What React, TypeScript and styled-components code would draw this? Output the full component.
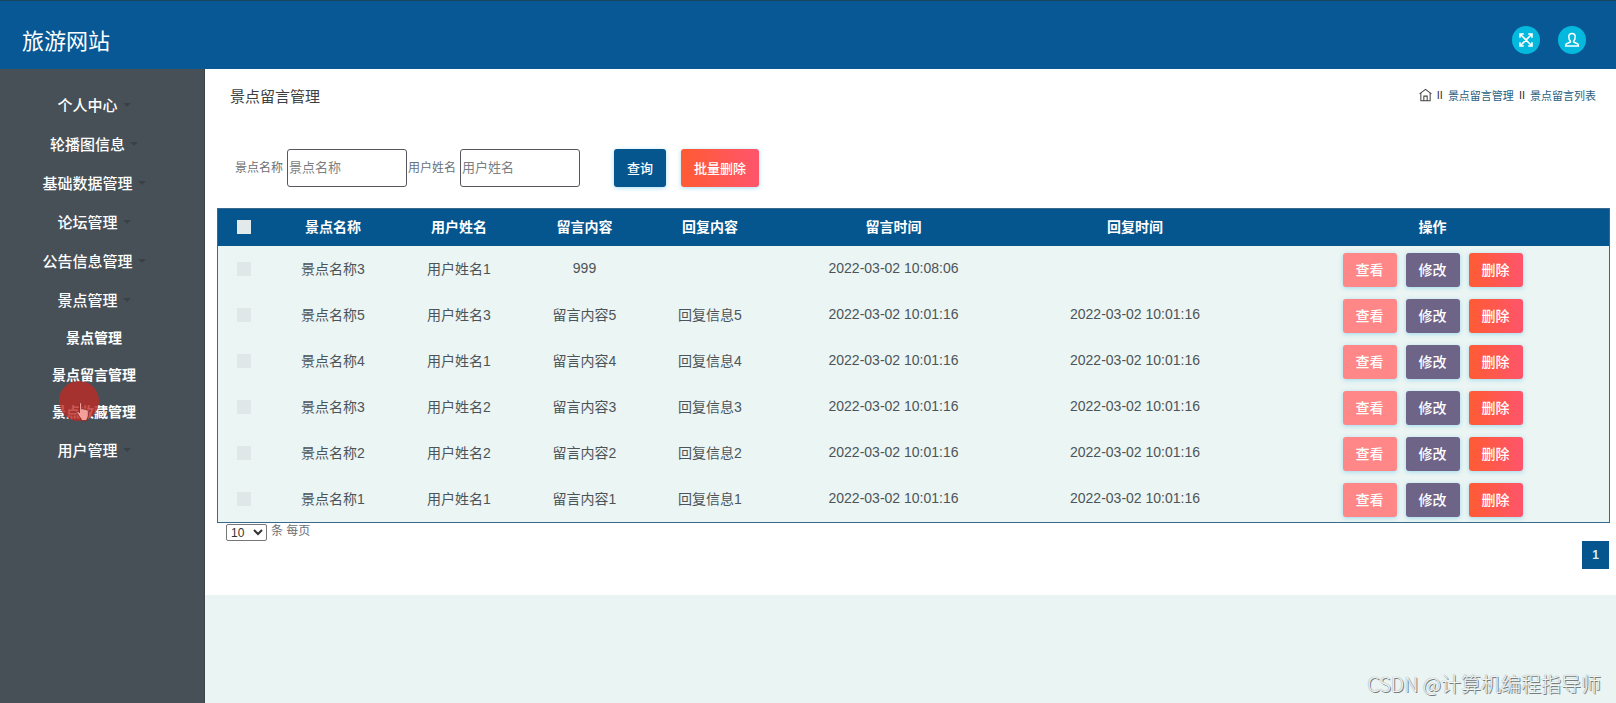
import React from "react";
import styled, { createGlobalStyle, css } from "styled-components";

const blue = "#05568f";

const GlobalStyle = createGlobalStyle`
  * { box-sizing: border-box; }
  body {
    margin: 0;
    background: #eaf4f3;
    font-family: "Liberation Sans", "Noto Sans CJK SC", sans-serif;
    color: #6b7075;
  }
  button, input, select { font-family: inherit; }
  a { text-decoration: none; color: inherit; }
`;

const Page = styled.div`
  position: relative;
  display: flex;
  flex-direction: column;
  min-height: 100vh;
`;

const Header = styled.header`
  display: flex;
  align-items: center;
  justify-content: space-between;
  height: 69px;
  padding: 10px 30px 0 22px;
  background: #075894;
  border-top: 1px solid #164657;
`;

const Brand = styled.h1`
  margin: 0;
  padding-top: 3px;
  font-size: 22px;
  line-height: 32px;
  font-weight: 400;
  color: #fff;
`;

const HeaderActions = styled.div`
  display: flex;
  gap: 18px;
`;

const RoundButton = styled.button`
  display: flex;
  align-items: center;
  justify-content: center;
  width: 28px;
  height: 28px;
  padding: 0;
  border: 0;
  border-radius: 50%;
  background: #04b9dd;
  color: #fff;
`;

const Body = styled.div`
  display: flex;
  flex: 1;
`;

const Sidebar = styled.nav`
  position: relative;
  flex: 0 0 205px;
  padding: 16px 16px 0 0;
  background: #485057;
  border-right: 1px solid #3c4448;
`;

const Menu = styled.ul`
  margin: 0;
  padding: 0;
  list-style: none;
`;

const MenuLink = styled.a<{ $sub?: boolean }>`
  display: flex;
  align-items: center;
  justify-content: center;
  gap: 5px;
  height: 39px;
  font-size: 15px;
  font-weight: 500;
  color: #fff;
  ${(p) =>
    p.$sub &&
    css`
      height: 37px;
      padding-bottom: 2px;
      font-size: 14px;
      font-weight: 700;
    `}
`;

const Caret = styled.span`
  border: 4px solid transparent;
  border-top-color: #3a4146;
  border-bottom: 0;
`;

const Pointer = styled.div`
  position: absolute;
  left: 59px;
  top: 312px;
  width: 40px;
  height: 40px;
  border-radius: 50%;
  background: rgba(190, 42, 38, 0.8);
  svg {
    position: absolute;
    left: 17px;
    top: 21px;
  }
`;

const Main = styled.main`
  flex: 1;
  min-width: 0;
`;

const Panel = styled.section`
  padding: 13px 7px 26px 12px;
  background: #fff;
`;

const TitleRow = styled.div`
  display: flex;
  align-items: center;
  justify-content: space-between;
  height: 26px;
  padding: 0 13px;
`;

const PageTitle = styled.h2`
  margin: 0;
  font-size: 15px;
  font-weight: 400;
  color: #3b3f42;
`;

const Crumbs = styled.nav`
  display: flex;
  align-items: center;
  gap: 5px;
  font-size: 11px;
  color: #333;
  a { color: #28607f; }
  svg { display: block; }
`;

const Filters = styled.form`
  display: flex;
  align-items: center;
  margin: 41px 0 21px;
  padding-left: 18px;
`;

const FieldLabel = styled.label`
  padding: 0 4px 4px 0;
  font-size: 12px;
`;

const TextInput = styled.input`
  width: 120px;
  height: 38px;
  margin-right: 1px;
  padding: 0 1px 1px;
  border: 1px solid #55595f;
  border-radius: 3px;
  background: #fff;
  font-size: 13px;
  color: #333;
  &::placeholder { color: #7b7f84; opacity: 1; }
`;

const fills = {
  query: blue,
  view: "#ff8787",
  edit: "#6e6488",
  remove: "linear-gradient(90deg, #ff5b33, #ff556c)",
};

const Button = styled.button<{ $fill: keyof typeof fills; $tall?: boolean }>`
  height: ${(p) => (p.$tall ? 38 : 34)}px;
  padding: 0 13px 2px;
  border: 0;
  border-radius: 3px;
  background: ${(p) => fills[p.$fill]};
  box-shadow: 0 1px 4px rgba(80, 190, 235, 0.5);
  font-size: ${(p) => (p.$tall ? 13 : 14)}px;
  font-weight: 500;
  color: #fff;
`;

const FilterButtons = styled.div`
  display: flex;
  gap: 15px;
  margin-left: 33px;
`;

const Table = styled.table`
  width: 100%;
  table-layout: fixed;
  border-collapse: separate;
  border-spacing: 0;
  border: 1px solid #39698c;
  background: #ebf5f3;
  font-size: 14px;
  color: #4d5459;
  text-align: center;
`;

const HeadCell = styled.th`
  height: 37px;
  padding: 0 0 3px;
  background: ${blue};
  color: #fff;
  font-weight: 700;
`;

const Cell = styled.td`
  height: 46px;
  padding: 0 0 2px;
`;

const Check = styled.input<{ $head?: boolean }>`
  appearance: none;
  display: block;
  width: 14px;
  height: 14px;
  margin: 2px auto 0;
  background: ${(p) => (p.$head ? "#e3eaec" : "#dfe7e8")};
`;

const RowActions = styled.div`
  display: flex;
  justify-content: center;
  gap: 9px;
  padding-top: 3px;
`;

const PageSize = styled.div`
  display: flex;
  align-items: center;
  gap: 4px;
  padding-left: 9px;
  font-size: 12px;
  line-height: 16px;
  select {
    width: 41px;
    height: 17px;
    padding: 0;
    border: 1px solid #767676;
    border-radius: 2px;
    background: #fff;
    font-size: 12px;
    color: #333;
  }
  label { padding-bottom: 2px; }
`;

const Pagination = styled.div`
  display: flex;
  justify-content: flex-end;
`;

const PageButton = styled.button`
  width: 27px;
  height: 28px;
  padding: 0;
  border: 0;
  background: ${blue};
  font-size: 12px;
  font-weight: 700;
  color: #d9eef5;
`;

const Watermark = styled.div`
  position: absolute;
  right: 15px;
  bottom: 4px;
  font-family: "Noto Sans CJK SC", sans-serif;
  font-size: 20px;
  line-height: 30px;
  font-weight: 300;
  color: #f4f6f6;
  text-shadow: 1px 1px 0 #777c7c, 0 0 1px #777c7c;
`;

const menu: { label: string; children?: string[] }[] = [
  { label: "个人中心" },
  { label: "轮播图信息" },
  { label: "基础数据管理" },
  { label: "论坛管理" },
  { label: "公告信息管理" },
  { label: "景点管理", children: ["景点管理", "景点留言管理", "景点收藏管理"] },
  { label: "用户管理" },
];

const columns = [
  { label: "景点名称", width: 126 },
  { label: "用户姓名", width: 126 },
  { label: "留言内容", width: 125 },
  { label: "回复内容", width: 126 },
  { label: "留言时间", width: 241 },
  { label: "回复时间", width: 242 },
  { label: "操作", width: 353 },
];

const rows = [
  ["景点名称3", "用户姓名1", "999", "", "2022-03-02 10:08:06", ""],
  ["景点名称5", "用户姓名3", "留言内容5", "回复信息5", "2022-03-02 10:01:16", "2022-03-02 10:01:16"],
  ["景点名称4", "用户姓名1", "留言内容4", "回复信息4", "2022-03-02 10:01:16", "2022-03-02 10:01:16"],
  ["景点名称3", "用户姓名2", "留言内容3", "回复信息3", "2022-03-02 10:01:16", "2022-03-02 10:01:16"],
  ["景点名称2", "用户姓名2", "留言内容2", "回复信息2", "2022-03-02 10:01:16", "2022-03-02 10:01:16"],
  ["景点名称1", "用户姓名1", "留言内容1", "回复信息1", "2022-03-02 10:01:16", "2022-03-02 10:01:16"],
];

const ExpandIcon = () => (
  <svg width="14" height="14" viewBox="0 0 14 14" fill="none" stroke="currentColor" strokeWidth="1.6">
    <path d="M2 2l10 10M12 2L2 12M1 4.800V1h3.800M9.200 1H13v3.800M13 9.200V13H9.200M4.800 13H1V9.200" />
  </svg>
);

const UserIcon = () => (
  <svg width="16" height="16" viewBox="0 0 16 16" fill="none" stroke="currentColor" strokeWidth="1.5">
    <path d="M6.400 9C5.200 8 4.800 6.300 4.800 4.800 4.800 2.800 6 1.500 8 1.500s3.200 1.300 3.200 3.300c0 1.500-.4 3.200-1.600 4.200v1l3.800 1.700c.7.300 1 .900 1 2.300H1.600c0-1.400.3-2 1-2.300L6.400 10z" />
  </svg>
);

const HomeIcon = () => (
  <svg width="13" height="14" viewBox="0 0 14 14" fill="none" stroke="#444" strokeWidth="1.1">
    <path d="M.6 5.800L7 .9l6.400 4.900M2 5v8.300h10V5M5.200 13.300V8.200h3.600v5.100" />
  </svg>
);

const HandIcon = () => (
  <svg width="15" height="20" viewBox="0 0 15 20" fill="#f3a09b" stroke="#7c1f1f" strokeWidth=".8">
    <path d="M3.500 1.800c0-1.600 2.200-1.600 2.200 0v5.400c.4-1 2.100-.8 2.200.4.500-.9 2-.6 2.200.5.600-.7 2.200-.4 2.200 1v4.400c0 1.500-.8 2.500-1.300 3.500v1.600H5.200v-1.500C3.700 15.400 2.400 13 1 11c-.8-1.300.8-2.200 1.700-1.200l.8 1z" />
  </svg>
);

export default function App() {
  return (
    <Page>
      <GlobalStyle />
      <Header>
        <Brand>旅游网站</Brand>
        <HeaderActions>
          <RoundButton aria-label="全屏"><ExpandIcon /></RoundButton>
          <RoundButton aria-label="用户"><UserIcon /></RoundButton>
        </HeaderActions>
      </Header>
      <Body>
        <Sidebar>
          <Menu>
            {menu.map((item) => (
              <li key={item.label}>
                <MenuLink href="#">{item.label}<Caret /></MenuLink>
                {item.children && (
                  <Menu>
                    {item.children.map((child) => (
                      <li key={child}><MenuLink href="#" $sub>{child}</MenuLink></li>
                    ))}
                  </Menu>
                )}
              </li>
            ))}
          </Menu>
          <Pointer><HandIcon /></Pointer>
        </Sidebar>
        <Main>
          <Panel>
            <TitleRow>
              <PageTitle>景点留言管理</PageTitle>
              <Crumbs>
                <a href="#" aria-label="首页"><HomeIcon /></a>
                <span>II</span>
                <a href="#">景点留言管理</a>
                <span>II</span>
                <a href="#">景点留言列表</a>
              </Crumbs>
            </TitleRow>
            <Filters onSubmit={(e) => e.preventDefault()}>
              <FieldLabel htmlFor="spot">景点名称</FieldLabel>
              <TextInput id="spot" placeholder="景点名称" />
              <FieldLabel htmlFor="user">用户姓名</FieldLabel>
              <TextInput id="user" placeholder="用户姓名" />
              <FilterButtons>
                <Button type="submit" $fill="query" $tall>查询</Button>
                <Button type="button" $fill="remove" $tall>批量删除</Button>
              </FilterButtons>
            </Filters>
            <Table>
              <colgroup>
                <col width={52} />
                {columns.map((c) => <col key={c.label} width={c.width} />)}
              </colgroup>
              <thead>
                <tr>
                  <HeadCell><Check type="checkbox" aria-label="全选" $head /></HeadCell>
                  {columns.map((c) => <HeadCell key={c.label}>{c.label}</HeadCell>)}
                </tr>
              </thead>
              <tbody>
                {rows.map((row, i) => (
                  <tr key={i}>
                    <Cell><Check type="checkbox" aria-label={row[0]} /></Cell>
                    {row.map((value, j) => <Cell key={j}>{value}</Cell>)}
                    <Cell>
                      <RowActions>
                        <Button $fill="view">查看</Button>
                        <Button $fill="edit">修改</Button>
                        <Button $fill="remove">删除</Button>
                      </RowActions>
                    </Cell>
                  </tr>
                ))}
              </tbody>
            </Table>
            <PageSize>
              <select id="size" aria-label="每页条数" defaultValue="10">
                <option>10</option>
                <option>20</option>
                <option>50</option>
              </select>
              <label htmlFor="size">条 每页</label>
            </PageSize>
            <Pagination><PageButton>1</PageButton></Pagination>
          </Panel>
        </Main>
      </Body>
      <Watermark>CSDN @计算机编程指导师</Watermark>
    </Page>
  );
}
